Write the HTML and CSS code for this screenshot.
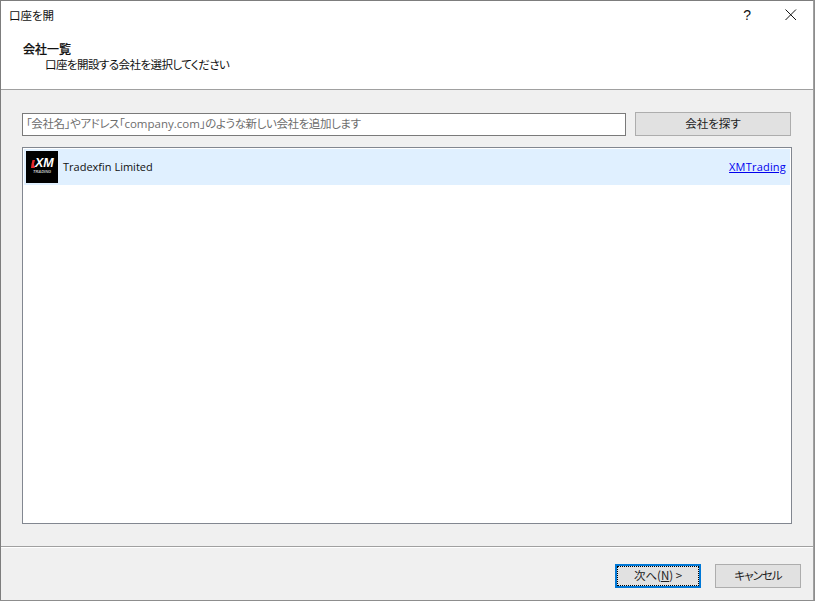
FILE: index.html
```html
<!DOCTYPE html>
<html lang="ja">
<head>
<meta charset="utf-8">
<title>口座を開</title>
<link rel="stylesheet" href="styles.css">
</head>
<body>
<div class="window">
  <header class="header">
    <div class="titlebar">
      <span class="title">口座を開</span>
      <span class="help">?</span>
      <svg class="close" width="12" height="12" viewBox="0 0 12 12"><path d="M0.5 0.5L11 11M11 0.5L0.5 11" stroke="#111" stroke-width="1" fill="none"/></svg>
    </div>
    <div class="heading">会社一覧</div>
    <div class="subheading">口座を開設する会社を選択してください</div>
  </header>
  <main class="content">
    <div class="search">
      <div class="input">「会社名」やアドレス「<span class="latin">company.com</span>」のような新しい会社を追加します</div>
      <div class="btn find">会社を探す</div>
    </div>
    <div class="list">
      <div class="row">
        <div class="logo">
          <svg class="logo-flash" width="4" height="8" viewBox="0 0 4 8"><path d="M1.5 0L4 0L3 4L4 8L0 8L0.5 4Z" fill="#e8262a"/></svg>
          <span class="logo-xm">XM</span>
          <span class="logo-sub">TRADING</span>
        </div>
        <span class="company">Tradexfin Limited</span>
        <a class="link" href="#">XMTrading</a>
      </div>
    </div>
  </main>
  <footer class="footer">
    <div class="btn next"><span class="focus">次へ(<u>N</u>) &gt;</span></div>
    <div class="btn cancel">キャンセル</div>
  </footer>
</div>
</body>
</html>
```
FILE: styles.css
```css
* { box-sizing: border-box; }
html, body { margin: 0; padding: 0; background: #8d8d8d; }
body {
  width: 815px;
  height: 601px;
  overflow: hidden;
  font-family: "Noto Sans CJK JP", "Noto Sans", sans-serif;
  font-size: 11.5px;
  font-feature-settings: "palt";
  color: #111;
}
.window {
  width: 814px;
  height: 600px;
  border: 1px solid #7d7d7d;
  border-bottom: 0;
  border-right-color: #a0a0a0;
  background: #f0f0f0;
  display: flex;
  flex-direction: column;
}
.header {
  height: 89px;
  flex: none;
  background: #fff;
  border-bottom: 1px solid #a0a0a0;
}
.titlebar {
  height: 30px;
  display: flex;
  align-items: center;
  padding: 0 16px 3px 8px;
}
.title { line-height: 16px; flex: 1; }
.help { font-size: 14px; margin-right: 34px; font-family: "Liberation Sans", sans-serif; }
.close { display: block; }
.heading {
  margin: 10px 0 0 22px;
  font-size: 12px;
  line-height: 16px;
  font-weight: 500;
  -webkit-text-stroke: 0.2px #111;
}
.subheading {
  margin: -1px 0 0 44px;
  line-height: 16px;
  letter-spacing: -0.55px;
}
.content {
  flex: 1;
  padding: 22px 21px 22px 21px;
  display: flex;
  flex-direction: column;
}
.search {
  display: flex;
  align-items: flex-start;
  gap: 9px;
  height: 35px;
  flex: none;
}
.input {
  width: 604px;
  height: 23px;
  margin-top: 1px;
  border: 1px solid #7a7a7a;
  background: #fff;
  color: #6d6d6d;
  line-height: 19px;
  padding-left: 3px;
  letter-spacing: -0.4px;
  white-space: nowrap;
  overflow: hidden;
}
.latin { font-family: "Open Sans", "Noto Sans", sans-serif; letter-spacing: 0; }
.btn {
  background: #e1e1e1;
  border: 1px solid #adadad;
  text-align: center;
  color: #222;
}
.find { width: 156px; height: 24px; line-height: 20px; }
.list {
  width: 770px;
  flex: 1;
  border: 1px solid #828790;
  background: #fff;
  padding: 1px;
}
.row {
  height: 36px;
  background: #e0f0ff;
  display: flex;
  align-items: center;
  padding-left: 2px;
  padding-right: 4px;
}
.logo {
  width: 32px;
  height: 32px;
  background: #000;
  margin-right: 5px;
  position: relative;
  flex: none;
  color: #fff;
  font-family: "Liberation Sans", sans-serif;
  font-style: italic;
  font-weight: 700;
}
.logo-flash { position: absolute; left: 5px; top: 9px; }
.logo-xm { position: absolute; left: 9px; top: 7px; font-size: 12.5px; line-height: 11px; }
.logo-sub { position: absolute; left: 7px; top: 18px; font-size: 4px; line-height: 5px; color: #c4c4c4; }
.company, .link { font-family: "Open Sans", "Noto Sans", sans-serif; font-size: 11px; line-height: 15px; margin-top: -2px; }
.company { flex: 1; }
.link { color: #0000ee; letter-spacing: 0.2px; }
.footer {
  height: 54px;
  flex: none;
  border-top: 1px solid #a0a0a0;
  box-shadow: inset 0 1px 0 #fff;
  display: flex;
  justify-content: flex-end;
  align-items: flex-start;
  gap: 14px;
  padding: 17px 12px 0 0;
}
.next {
  width: 86px;
  height: 24px;
  border: 2px solid #0078d7;
  padding: 0;
}
.focus {
  display: block;
  height: 20px;
  line-height: 17px;
  border: 1px dotted #000;
}
.cancel { width: 86px; height: 24px; line-height: 20px; letter-spacing: -1px; }
```
